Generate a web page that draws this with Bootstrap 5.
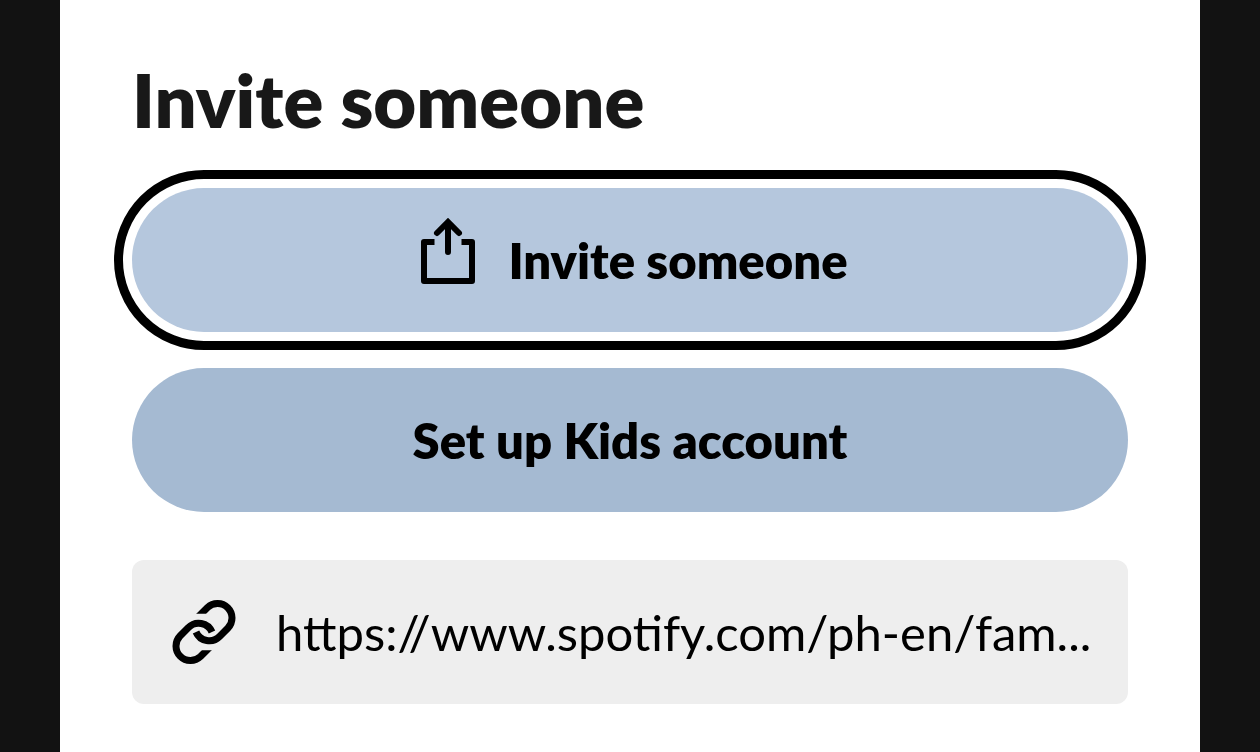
<!DOCTYPE html>
<html lang="en">
<head>
<meta charset="utf-8">
<meta name="viewport" content="width=device-width, initial-scale=1">
<title>Invite someone</title>
<link href="https://cdn.jsdelivr.net/npm/bootstrap@5.3.0/dist/css/bootstrap.min.css" rel="stylesheet">
<style>
body { background: #121212; color: #000; font-family: Lato, "Liberation Sans", sans-serif; }
.page { padding: 0 60px; }
.panel { padding: 56px 72px 48px; }
.title { font-size: 74px; line-height: 88px; font-weight: 800; color: #181818; margin-bottom: 44px; }
.stack { gap: 36px; }
.pill { --bs-btn-color: #000; --bs-btn-bg: #a5bad2; --bs-btn-hover-bg: #b5c7dd; --bs-btn-hover-color: #000;
  min-height: 144px; padding: 0 48px; font-size: 49px; line-height: 72px; font-weight: 800; border: 0; }
.pill-focus { --bs-btn-bg: #b5c7dd; outline: 9px solid #000; outline-offset: 9px; }
.pill-icon { width: 72px; height: 72px; margin: 0 24px 24px 0; }
.link-box { background: #eee; min-height: 144px; margin-top: 48px; padding: 0 36px 0 40px; gap: 40px; border-radius: 12px; }
.link-icon { width: 64px; height: 64px; }
.link-text { font-size: 49px; line-height: 72px; min-width: 0; text-overflow: ellipsis; color: #000; }
</style>
</head>
<body>
<div class="page">
  <main class="panel bg-white min-vh-100">
    <h1 class="title">Invite someone</h1>
    <div class="stack d-flex flex-column">
      <button type="button" class="btn pill pill-focus rounded-pill d-flex align-items-center justify-content-center">
        <svg class="pill-icon flex-shrink-0" viewBox="0 0 72 72" fill="none" stroke="#000" stroke-width="6" aria-hidden="true">
          <path d="M22.500 30H12v39h48V30H49.500" stroke-linejoin="round"/>
          <path d="M36 40V11M25 21L36 10L47 21" stroke-linecap="round"/>
        </svg>
        <span>Invite someone</span>
      </button>
      <button type="button" class="btn pill rounded-pill">Set up Kids account</button>
    </div>
    <div class="link-box d-flex align-items-center">
      <label for="invite-link" class="d-flex flex-shrink-0" aria-label="Invite link">
        <svg class="link-icon" viewBox="0 0 64 64" fill="none" stroke="#000" stroke-width="7" aria-hidden="true">
          <defs>
            <clipPath id="linkGap"><path d="M0 0H64V64H15V22H36V13.800H0Z"/></clipPath>
            <path id="linkHalf" clip-path="url(#linkGap)" d="M26 17L35.500 7.500A14.500 14.500 0 0 1 56 28L47.800 36.300A14.500 14.500 0 0 1 24 32"/>
          </defs>
          <use href="#linkHalf"/>
          <use href="#linkHalf" transform="rotate(180 32 32)"/>
        </svg>
      </label>
      <input id="invite-link" type="text" readonly class="link-text flex-grow-1 border-0 bg-transparent p-0" value="https://www.spotify.com/ph-en/fam...">
    </div>
  </main>
</div>
<script src="https://cdn.jsdelivr.net/npm/bootstrap@5.3.0/dist/js/bootstrap.bundle.min.js"></script>
</body>
</html>
